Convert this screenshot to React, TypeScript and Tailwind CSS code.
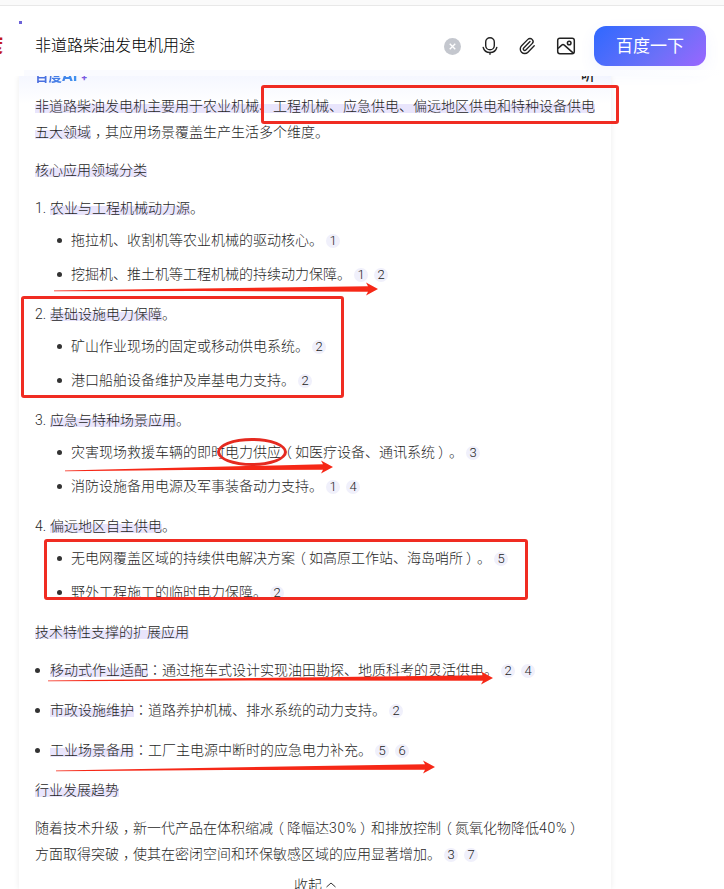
import React from 'react';
import clsx from 'clsx';
import { Paperclip } from 'lucide-react';

type Point = { text: string; refs: number[] };

const sections: { title: string; points: Point[]; clipped?: boolean }[] = [
  {
    title: '农业与工程机械动力源',
    points: [
      { text: '拖拉机、收割机等农业机械的驱动核心。', refs: [1] },
      { text: '挖掘机、推土机等工程机械的持续动力保障。', refs: [1, 2] },
    ],
  },
  {
    title: '基础设施电力保障',
    points: [
      { text: '矿山作业现场的固定或移动供电系统。', refs: [2] },
      { text: '港口船舶设备维护及岸基电力支持。', refs: [2] },
    ],
  },
  {
    title: '应急与特种场景应用',
    points: [
      { text: '灾害现场救援车辆的即时电力供应（如医疗设备、通讯系统）。', refs: [3] },
      { text: '消防设施备用电源及军事装备动力支持。', refs: [1, 4] },
    ],
  },
  {
    title: '偏远地区自主供电',
    clipped: true,
    points: [
      { text: '无电网覆盖区域的持续供电解决方案（如高原工作站、海岛哨所）。', refs: [5] },
      { text: '野外工程施工的临时电力保障。', refs: [2] },
    ],
  },
];

const extensions = [
  { label: '移动式作业适配', text: '：通过拖车式设计实现油田勘探、地质科考的灵活供电。', refs: [2, 4] },
  { label: '市政设施维护', text: '：道路养护机械、排水系统的动力支持。', refs: [2] },
  { label: '工业场景备用', text: '：工厂主电源中断时的应急电力补充。', refs: [5, 6] },
];

// full-width commas, colons and brackets sit in the middle of their cell
const Text = ({ children }: { children: string }) => (
  <>
    {children.split(/([，：（）]|\d+%)/).map((part, i) => {
      if (/^\d+%$/.test(part)) {
        return (
          <span key={i} className="tracking-[0.7px]">
            {part}
          </span>
        );
      }
      if (!/^[，：（）]$/.test(part)) return part;
      return (
        <span
          key={i}
          className={clsx(
            'inline-block h-4 w-[14px] leading-4',
            part === '，' && "translate-y-1 font-['Noto_Sans_CJK_TC',sans-serif]",
            part === '：' && "font-['Noto_Sans_CJK_TC',sans-serif]",
            part === '（' && '-translate-x-[3px]',
            part === '）' && 'translate-x-[3px]'
          )}
        >
          {part}
        </span>
      );
    })}
  </>
);

const Mark = ({ children }: { children: string }) => (
  <span className="bg-[linear-gradient(transparent_38%,#e9e5fc_38%,#e9e5fc_94%,transparent_94%)]">
    <Text>{children}</Text>
  </span>
);

const Refs = ({ ids }: { ids: number[] }) => (
  <span className="ml-[3px] inline-flex gap-1.5 align-middle">
    {ids.map((id) => (
      <span
        key={id}
        className="flex h-3.5 w-3.5 items-center justify-center rounded-full bg-[#f0f0fb] text-[13px] leading-[14px] text-[#222]"
      >
        {id}
      </span>
    ))}
  </span>
);

const Bullet = () => <span className="h-[5px] w-[5px] shrink-0 rounded-full bg-[#333]" />;

const Header = () => (
  <header className="relative z-10 flex h-[76px] flex-col bg-white">
    <div className="h-[5px] bg-[#fafafa]" />
    <div className="h-px bg-[#e8e8e8]" />
    <div className="flex flex-1 items-start pt-5">
      <div className="flex h-10 w-[35px] shrink-0 items-center overflow-hidden">
        <span className="-ml-[15px] text-[18px] font-black text-[#c4161c]">度</span>
      </div>
      <div className="h-10 flex-1 text-base leading-10 text-black">非道路柴油发电机用途</div>
      <div className="flex h-10 items-center">
        <svg className="mr-[19px] h-[17px] w-[17px]" viewBox="0 0 16 16">
          <circle cx="8" cy="8" r="8" fill="#c4c7ce" />
          <path d="M5.400 5.400l5.200 5.200M10.600 5.400l-5.200 5.200" stroke="#fff" strokeWidth="1.300" />
        </svg>
        <svg className="mr-[18px] h-5 w-5" viewBox="0 0 20 20" fill="none" stroke="#222" strokeWidth="1.400" strokeLinecap="round">
          <rect x="5.700" y="1.700" width="8.600" height="12" rx="4.300" />
          <path d="M3.200 11.500c.8 3 3.500 5 6.800 5s6-2 6.800-5M10 16.500v1.800" />
        </svg>
        <Paperclip className="mr-5 h-[18px] w-[18px] text-[#222]" strokeWidth={1.8} />
        <svg className="mr-[18px] h-5 w-5" viewBox="0 0 20 20" fill="none" stroke="#222" strokeWidth="1.500" strokeLinejoin="round">
          <rect x="1.700" y="2.200" width="16.600" height="15.600" rx="2.200" />
          <circle cx="13.200" cy="7" r="1.800" />
          <path d="M2 12.500l3.700-3.400q1.300-1 2.600 0l9 8" />
        </svg>
      </div>
      <button className="mr-[18px] h-10 w-28 rounded-xl bg-[linear-gradient(135deg,#2f68ff_0%,#6b70f8_60%,#9a66ff_100%)] text-[17px] font-normal text-white shadow-[0_6px_16px_rgba(90,110,255,0.08)]">
        百度一下
      </button>
    </div>
    <div className="ml-6 h-1.5 bg-[linear-gradient(90deg,#fafbff_85%,#fff)]" />
    <span className="absolute top-[21px] left-[19px] h-[3px] w-[3px] bg-[#6c63d8]" />
  </header>
);

const RedArrow = ({ className, width, rise = 2 }: { className: string; width: number; rise?: number }) => (
  <svg className={clsx('absolute overflow-visible', className)} width={width} height="14" viewBox={`0 0 ${width} 14`}>
    <polygon
      points={`0,${6.5 + rise} ${width - 10},4.200 ${width - 12},0.500 ${width},7 ${width - 12},13.500 ${width - 10},9.800 ${width * 0.45},${8 + rise / 2} 0,${7.2 + rise}`}
      fill="#f62817"
    />
  </svg>
);

const RedBox = ({ className }: { className: string }) => (
  <div className={clsx('absolute rounded-[3px] border-3 border-[#f02c22]', className)} />
);

const Annotations = () => (
  <div className="pointer-events-none absolute inset-0 z-20">
    <RedBox className="top-[85px] left-[261px] h-[39px] w-[358px]" />
    <RedBox className="top-[296px] left-[21px] h-[102px] w-[323px]" />
    <RedBox className="top-[539px] left-[44px] h-[61px] w-[484px]" />
    <div className="absolute top-[438px] left-[217px] h-[28px] w-[70px] rounded-[50%] border-3 border-[#e52a20]" />
    <RedArrow className="top-[282px] left-[54px]" width={324} />
    <RedArrow className="top-[460px] left-[65px]" width={268} rise={4} />
    <RedArrow className="top-[671px] left-[48px]" width={445} rise={3} />
    <RedArrow className="top-[760px] left-[56px]" width={379} rise={4} />
  </div>
);

const App = () => {
  return (
    <div className="relative h-[889px] w-[724px] overflow-hidden bg-white font-['Roboto','Noto_Sans_CJK_SC',sans-serif] text-sm leading-[26px] font-light text-[#1f1f1f]">
      <Header />
      <main className="ml-[19px] h-[813px] w-[592px] bg-[linear-gradient(#f5f7ff,#fff_28px)] px-4 shadow-[0_0_6px_rgba(0,0,0,0.08)]">
        <div className="flex h-[17px] items-start justify-between overflow-hidden">
          <div className="-mt-[13px] flex h-[26px] text-[13.500px] font-bold">
            <span className="bg-linear-to-r from-[#4a68dc] to-[#3e93f0] bg-clip-text text-transparent">
              百度<span className="text-base">AI</span>
            </span>
            <span className="ml-1 text-[10px] leading-[30px] text-[#7a5be0]">+</span>
          </div>
          <div className="-mt-[14px] text-[14px] font-medium text-[#222]">听</div>
        </div>

        <p>
          <Mark>非道路柴油发电机主要用于农业机械、工程机械、应急供电、偏远地区供电和特种设备供电</Mark>
          <br />
          <Mark>五大领域</Mark>
          <Text>，其应用场景覆盖生产生活多个维度。</Text>
        </p>

        <h3 className="mt-3">
          <Mark>核心应用领域分类</Mark>
        </h3>

        <ol className="mt-3 flex flex-col gap-3.5">
          {sections.map((section, i) => (
            <li key={section.title}>
              <div className="flex">
                <span className="w-[15px]">{i + 1}.</span>
                <span>
                  <Mark>{section.title}</Mark>。
                </span>
              </div>
              <ul className="mt-1.5 flex flex-col gap-2">
                {section.points.map((point, j) => (
                  <li
                    key={point.text}
                    className={clsx(
                      'flex items-center pl-[22px] whitespace-nowrap',
                      section.clipped && j === 1 ? 'mb-[7px] h-[19px] items-start overflow-hidden' : 'h-[26px]'
                    )}
                  >
                    <span className="flex h-[26px] w-[14px] shrink-0 items-center">
                      <Bullet />
                    </span>
                    <span>
                      <Text>{point.text}</Text>
                      <Refs ids={point.refs} />
                    </span>
                  </li>
                ))}
              </ul>
            </li>
          ))}
        </ol>

        <h3 className="mt-3.5">
          <Mark>技术特性支撑的扩展应用</Mark>
        </h3>

        <ul className="mt-3 flex flex-col gap-3.5">
          {extensions.map((item) => (
            <li key={item.label} className="flex h-[26px] items-center whitespace-nowrap">
              <span className="flex w-[15px] shrink-0 items-center">
                <Bullet />
              </span>
              <span>
                <Mark>{item.label}</Mark>
                <Text>{item.text}</Text>
                <Refs ids={item.refs} />
              </span>
            </li>
          ))}
        </ul>

        <h3 className="mt-3.5">
          <Mark>行业发展趋势</Mark>
        </h3>

        <p className="mt-3 whitespace-nowrap">
          <Text>随着技术升级，新一代产品在体积缩减（降幅达30%）和排放控制（氮氧化物降低40%）</Text>
          <br />
          <Text>方面取得突破，使其在密闭空间和环保敏感区域的应用显著增加。</Text>
          <Refs ids={[3, 7]} />
        </p>

        <div className="mt-[5px] flex items-center justify-center gap-1">
          收起
          <svg className="h-2.5 w-2.5" viewBox="0 0 10 10" fill="none" stroke="#333" strokeWidth="1">
            <path d="M.5 7L5 3l4.500 4" />
          </svg>
        </div>
      </main>
      <Annotations />
    </div>
  );
};

export default App;
